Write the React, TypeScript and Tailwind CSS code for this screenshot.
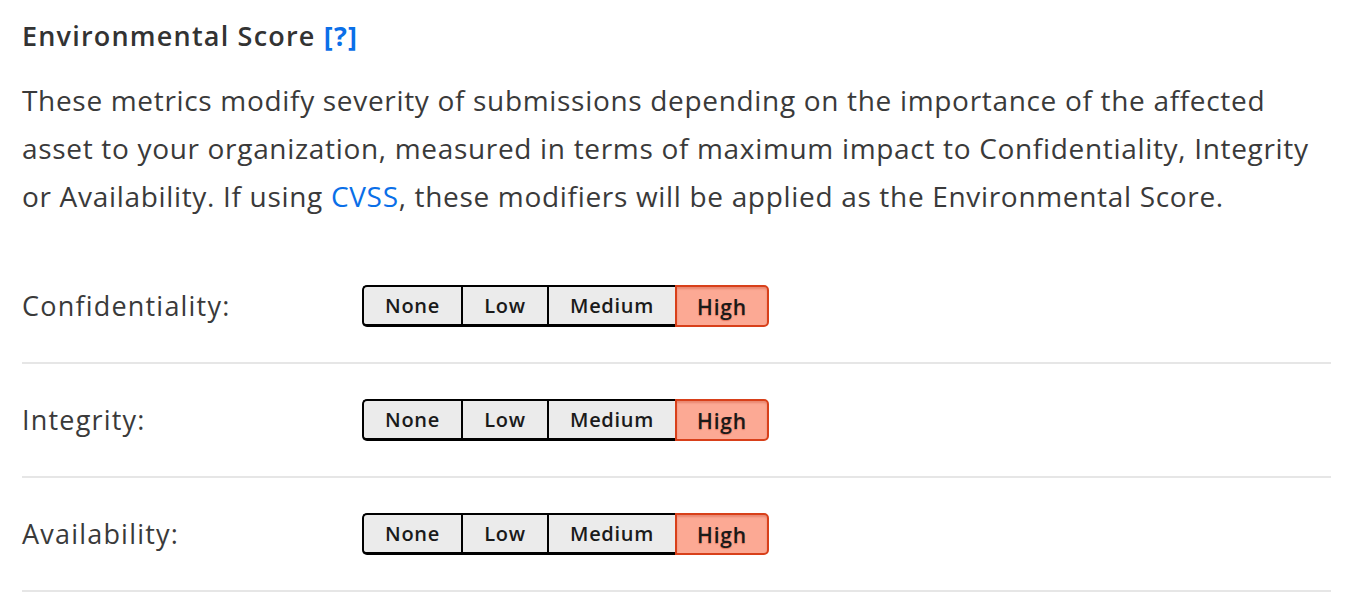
import React from "react";

const levels = ["None", "Low", "Medium", "High"] as const;
const widths: Record<string, string> = {
  None: "w-[99px]",
  Low: "w-[86px]",
  Medium: "w-[128px]",
  High: "w-[94px]",
};

function Segmented({ value }: { value: string }) {
  return (
    <div className="flex h-[42px]">
      {levels.map((l, i) => {
        const active = l === value;
        const first = i === 0;
        const last = i === levels.length - 1;
        if (active) {
          return (
            <div
              key={l}
              className={`${widths[l]} flex items-center justify-center border-2 border-[#d8401a] bg-[#fca994] pt-[4px] text-[21px] font-semibold tracking-[0.8px] text-[#1a1a1a] shadow-[inset_0_2px_2px_rgba(180,40,10,0.25)] [text-shadow:0_1px_1px_rgba(200,60,30,0.5)] ${
                last ? "rounded-r-[5px]" : ""
              }`}
            >
              {l}
            </div>
          );
        }
        return (
          <div
            key={l}
            className={`${widths[l]} flex items-center justify-center border-t-2 border-b-[3px] border-black bg-[#ebebeb] text-[20px] font-semibold tracking-[0.7px] text-[#1a1a1a] ${
              first ? "rounded-l-[5px] border-l-2" : "border-l-2"
            }`}
          >
            {l}
          </div>
        );
      })}
    </div>
  );
}

function Row({ label }: { label: string }) {
  return (
    <div className="flex items-center border-b-2 border-[#e6e6e6] py-[35px]">
      <div className="w-[340px] text-[27px] tracking-[1.2px] text-[#3a3a3a]">{label}</div>
      <Segmented value="High" />
    </div>
  );
}

export default function App() {
  return (
    <div
      className="min-h-[612px] bg-white pl-[22px] pr-[23px] pt-[18px]"
      style={{ fontFamily: '"Open Sans", "Noto Sans", sans-serif' }}
    >
      <h2 className="text-[27px] font-semibold leading-[36px] tracking-[1.2px] text-[#333]">
        Environmental Score <a className="font-bold text-[#0a6fe8]">[?]</a>
      </h2>
      <p className="mt-[22px] whitespace-nowrap text-[28px] leading-[48px] tracking-[0.68px] text-[#3a3a3a]">
        These metrics modify severity of submissions depending on the importance of the affected
        <br />
        asset to your organization, measured in terms of maximum impact to Confidentiality, Integrity
        <br />
        or Availability. If using <a className="text-[#0a6fe8]">CVSS</a>, these modifiers will be applied as the Environmental Score.
      </p>
      <div className="mt-[30px]">
        <Row label="Confidentiality:" />
        <Row label="Integrity:" />
        <Row label="Availability:" />
      </div>
    </div>
  );
}
